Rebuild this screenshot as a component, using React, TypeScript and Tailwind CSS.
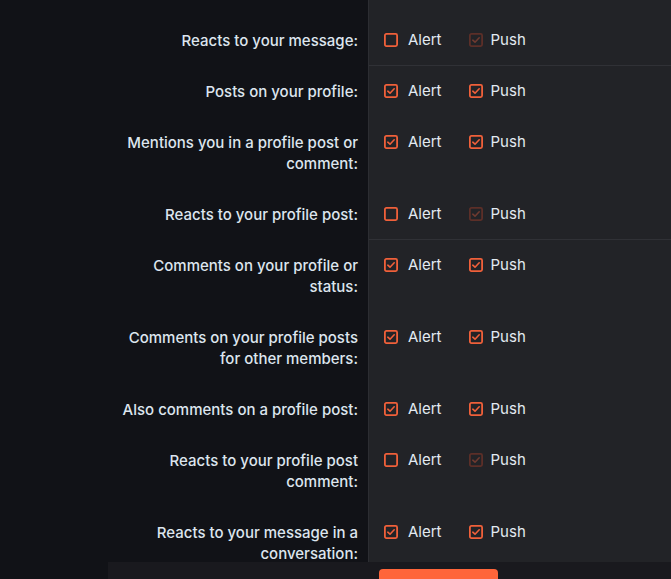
import React from 'react'

type Row = {
  label: string[]
  alert: boolean
  push: 'on' | 'off-disabled'
  divider?: boolean
}

const ROWS: Row[] = [
  { label: ['Reacts to your message:'], alert: false, push: 'off-disabled', divider: true },
  { label: ['Posts on your profile:'], alert: true, push: 'on' },
  { label: ['Mentions you in a profile post or', 'comment:'], alert: true, push: 'on' },
  { label: ['Reacts to your profile post:'], alert: false, push: 'off-disabled', divider: true },
  { label: ['Comments on your profile or', 'status:'], alert: true, push: 'on' },
  { label: ['Comments on your profile posts', 'for other members:'], alert: true, push: 'on' },
  { label: ['Also comments on a profile post:'], alert: true, push: 'on' },
  { label: ['Reacts to your profile post', 'comment:'], alert: false, push: 'off-disabled' },
  { label: ['Reacts to your message in a', 'conversation:'], alert: true, push: 'on' },
]

function Box({ checked, dim }: { checked: boolean; dim?: boolean }) {
  const stroke = dim ? '#5c2f28' : '#f0603a'
  return (
    <svg viewBox="0 0 14 14" className="h-[14px] w-[14px] shrink-0" fill="none">
      <rect x="0.9" y="0.9" width="12.2" height="12.2" rx="1.5" stroke={stroke} strokeWidth="1.8" />
      {checked && (
        <path
          d="M3.8 7.2 L6 9.2 L10.2 4.8"
          stroke={dim ? '#6e3a30' : '#f0603a'}
          strokeWidth="1.6"
          strokeLinecap="round"
          strokeLinejoin="round"
        />
      )}
    </svg>
  )
}

export default function App() {
  return (
    <div className="relative h-[579px] w-[671px] overflow-hidden bg-[#111217] font-['Inter',sans-serif]">
      <div className="flex h-full">
        <div className="w-[368px] shrink-0" />
        <div className="flex-1 border-l border-[#2c2d32] bg-[#222327]" />
      </div>

      <div className="absolute inset-0 pt-[14.5px]">
        {ROWS.map((r, i) => (
          <div key={i} className="flex">
            <div className="w-[368px] shrink-0 pr-[10px] pt-[15px] pb-[15px] text-right text-[15px] font-medium leading-[21px] text-[#dde5ee]">
              {r.label.map((l, j) => (
                <div key={j}>{l}</div>
              ))}
            </div>
            <div
              className={
                'ml-px flex flex-1 items-start pl-[15px] pt-[15px] ' +
                (r.divider ? 'border-b border-[#303136] pb-[13px]' : 'pb-[15px]')
              }
            >
              <label className="flex h-[21px] items-center gap-[10px] text-[15px] text-[#e3eaf1]">
                <Box checked={r.alert} />
                <span>Alert</span>
              </label>
              <label className="ml-[27px] flex h-[21px] items-center gap-[8px] text-[15px] text-[#e3eaf1]">
                <Box checked dim={r.push === 'off-disabled'} />
                <span>Push</span>
              </label>
            </div>
          </div>
        ))}
      </div>

      <div className="absolute bottom-0 left-[108px] right-0 flex h-[17px] items-end bg-[#19191e] pl-[271px]">
        <div className="h-[10px] w-[119px] rounded-t-[4px] bg-[#ff653a]" />
      </div>
    </div>
  )
}
